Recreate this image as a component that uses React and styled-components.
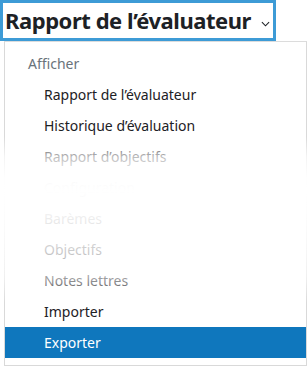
import React from 'react';
import styled, { createGlobalStyle } from 'styled-components';

const GlobalStyle = createGlobalStyle`
    html, body {
        margin: 0;
        padding: 0;
        background: #ffffff;
    }
    body {
        font-family: "Noto Sans", "Open Sans", sans-serif;
        color: #1d2125;
    }
`;

const sections = [
    {
        title: 'Afficher',
        items: [
            { label: 'Rapport de l’évaluateur' },
            { label: 'Historique d’évaluation' },
            { label: 'Rapport d’objectifs' },
            { label: 'Configuration' },
            { label: 'Barèmes' },
            { label: 'Objectifs' },
            { label: 'Notes lettres' },
            { label: 'Importer' },
            { label: 'Exporter', active: true },
        ],
    },
];

const App = () => {
    return (
        <>
            <GlobalStyle />
            <Page>
                <Trigger type="button">
                    <Title>Rapport de l’évaluateur</Title>
                    <Chevron viewBox="0 0 10 6" aria-hidden="true">
                        <path d="M1 1l4 4 4-4" fill="none" stroke="#1d2125" strokeWidth="1.2" />
                    </Chevron>
                </Trigger>
                <Menu>
                    {sections.map((section) => (
                        <Section key={section.title}>
                            <Header>{section.title}</Header>
                            {section.items.map((item) => (
                                <Item key={item.label} $active={item.active}>
                                    {item.label}
                                </Item>
                            ))}
                        </Section>
                    ))}
                    <Fade />
                </Menu>
            </Page>
        </>
    );
};

const Page = styled.div`
    width: 307px;
    height: 367px;
    overflow: hidden;
    display: flex;
    flex-direction: column;
    align-items: flex-start;
`;

const Trigger = styled.button`
    display: flex;
    align-items: center;
    gap: 10px;
    width: 276px;
    height: 41px;
    box-sizing: border-box;
    margin: 0;
    padding: 0 0 1px 2px;
    border: 3px solid #3d9bd6;
    background: #ffffff;
    font: inherit;
    color: inherit;
    cursor: pointer;
`;

const Title = styled.span`
    flex: none;
    font-size: 22px;
    font-weight: 700;
    line-height: 1;
    white-space: nowrap;
    letter-spacing: -0.45px;
`;

const Chevron = styled.svg`
    flex: none;
    width: 9px;
    height: 6px;
    margin-top: 7px;
`;

const Menu = styled.div`
    position: relative;
    box-sizing: border-box;
    width: 303px;
    margin-left: 4px;
    padding: 6px 0 7px;
    border: 1px solid #d9d9d9;
    border-top-color: #dcdcdc;
    background: #ffffff;
`;

const Section = styled.div`
    display: flex;
    flex-direction: column;
`;

const Header = styled.div`
    height: 31px;
    line-height: 31px;
    padding-left: 23px;
    font-size: 14px;
    color: #6a737b;
`;

const Item = styled.div`
    height: 31px;
    line-height: 31px;
    padding-left: 39px;
    font-size: 14px;
    white-space: nowrap;
    color: ${(p) => (p.$active ? '#ffffff' : '#1d2125')};
    background: ${(p) => (p.$active ? '#0f77bd' : 'transparent')};
`;

const Fade = styled.div`
    position: absolute;
    inset: -1px;
    pointer-events: none;
    background: linear-gradient(
        to bottom,
        rgba(255, 255, 255, 0) 0px,
        rgba(255, 255, 255, 0) 96px,
        rgba(255, 255, 255, 0.7) 116px,
        rgba(255, 255, 255, 0.97) 136px,
        rgba(255, 255, 255, 1) 150px,
        rgba(255, 255, 255, 0.94) 172px,
        rgba(255, 255, 255, 0.8) 205px,
        rgba(255, 255, 255, 0.6) 236px,
        rgba(255, 255, 255, 0) 262px
    );
`;

export default App;
